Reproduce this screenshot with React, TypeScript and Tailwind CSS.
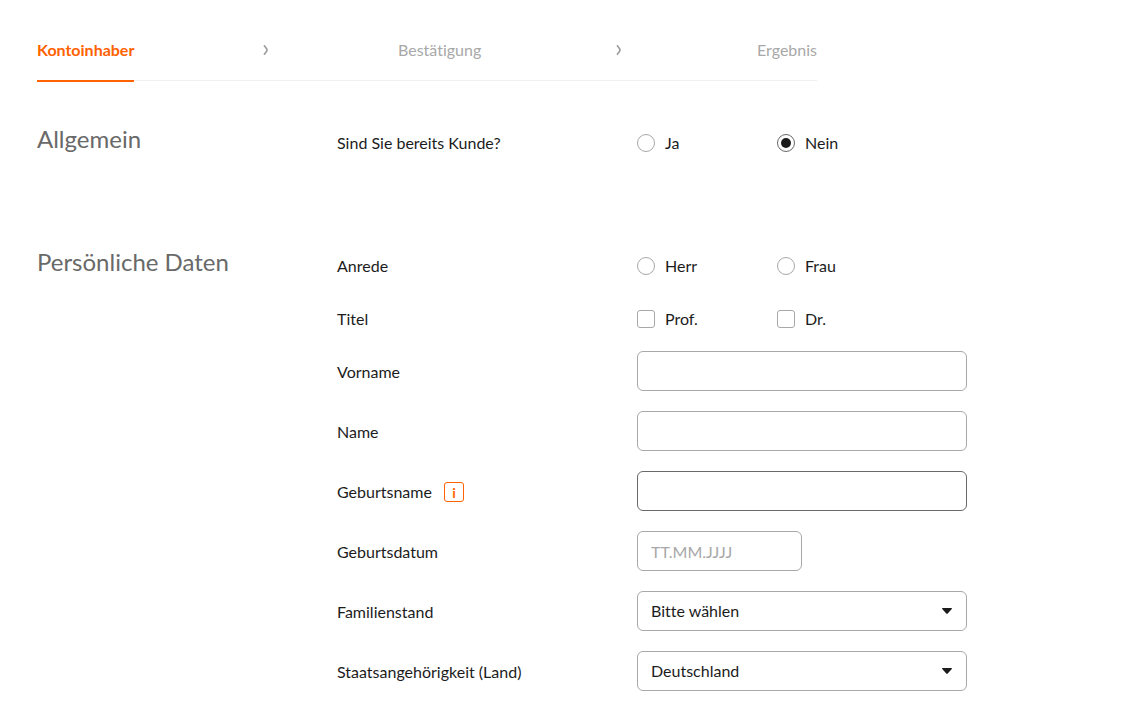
import { Fragment, useState } from 'react'
import type { InputHTMLAttributes, ReactNode } from 'react'

const steps = [
  { label: 'Kontoinhaber' },
  { label: 'Bestätigung', arrow: 'flex-[260]' },
  { label: 'Ergebnis', arrow: 'flex-[272]' },
]

const fieldClass =
  'h-10 w-full rounded-md border border-[#a8a8a8] bg-white px-[13px] text-base text-[#1c1c1c] outline-none placeholder:text-[#a8a8a8] placeholder:opacity-100 focus:border-[#696969]'

function StepArrow() {
  return (
    <svg width="6" height="10" viewBox="0 0 6 10" fill="none" aria-hidden="true">
      <path d="M1 0.3L3.4 3.4C4.3 4.6 4.3 5.4 3.4 6.6L1 9.7" stroke="#9a9a9a" strokeWidth="1.6" />
    </svg>
  )
}

function Steps() {
  return (
    <nav aria-label="Fortschritt" className="max-w-[780px]">
      <ol className="flex border-b border-[#f0f0f0]">
        {steps.map(({ label, arrow }, i) => (
          <Fragment key={label}>
            {arrow && (
              <li className={`flex h-6 items-center justify-center ${arrow}`} aria-hidden="true">
                <StepArrow />
              </li>
            )}
            <li
              aria-current={i === 0 ? 'step' : undefined}
              className={
                i === 0
                  ? '-mb-0.5 border-b-2 border-[#ff6200] pb-[18px] font-bold text-[#ff6200]'
                  : 'pb-[18px] text-[#a8a8a8]'
              }
            >
              {label}
            </li>
          </Fragment>
        ))}
      </ol>
    </nav>
  )
}

function Section({ title, children }: { title: string; children: ReactNode }) {
  return (
    <section className="grid grid-cols-[300px_minmax(0,1fr)]">
      <h2 className="-mt-1 text-2xl text-[#696969]">{title}</h2>
      <div>{children}</div>
    </section>
  )
}

interface ChoiceProps extends InputHTMLAttributes<HTMLInputElement> {
  label: string
}

function Choice({ label, type, ...props }: ChoiceProps) {
  return (
    <label className="flex w-[140px] items-center gap-2.5">
      <input
        type={type}
        className={
          type === 'radio'
            ? 'grid size-[18px] appearance-none place-content-center rounded-full border border-[#a8a8a8] before:size-2.5 before:rounded-full checked:border-[#696969] checked:before:bg-[#1c1c1c]'
            : 'grid size-[18px] appearance-none place-content-center rounded-[3px] border border-[#a8a8a8] before:size-2.5 checked:before:bg-[#1c1c1c]'
        }
        {...props}
      />
      {label}
    </label>
  )
}

function ChoiceRow({ legend, children }: { legend: string; children: ReactNode }) {
  return (
    <div role="group" aria-label={legend} className="grid h-8 grid-cols-[300px_minmax(0,1fr)] items-center">
      <span>{legend}</span>
      <div className="flex">{children}</div>
    </div>
  )
}

function FieldRow({ id, label, info, children }: { id: string; label: string; info?: boolean; children: ReactNode }) {
  return (
    <div className="grid grid-cols-[300px_minmax(0,1fr)] items-center">
      <div className="flex items-center gap-3 pt-0.5">
        <label htmlFor={id}>{label}</label>
        {info && (
          <button
            type="button"
            aria-label={`Info zu ${label}`}
            className="flex size-5 items-center justify-center rounded-[3px] border border-[#ff6200] pt-0.5 text-sm font-bold text-[#ff6200]"
          >
            i
          </button>
        )}
      </div>
      {children}
    </div>
  )
}

function Select({ id, options }: { id: string; options: string[] }) {
  return (
    <div className="relative">
      <select id={id} className={`${fieldClass} appearance-none`}>
        {options.map((option) => (
          <option key={option}>{option}</option>
        ))}
      </select>
      <svg
        className="pointer-events-none absolute inset-y-0 right-[15px] my-auto"
        width="10"
        height="6"
        viewBox="0 0 10 6"
        aria-hidden="true"
      >
        <path d="M0.6 0H9.4C9.9 0 10.1 0.6 9.8 0.9L5.7 5.6C5.3 6 4.7 6 4.3 5.6L0.2 0.9C-0.1 0.6 0.1 0 0.6 0Z" fill="#1c1c1c" />
      </svg>
    </div>
  )
}

export default function App() {
  const [customer, setCustomer] = useState('nein')

  return (
    <main className="min-h-screen bg-white px-[37px] pt-[38px] pb-3 font-['Lato','Noto_Sans',sans-serif] text-base text-[#1c1c1c] [font-variant-ligatures:none]">
      <Steps />
      <form className="mt-[46px] flex max-w-[930px] flex-col gap-[91px]">
        <Section title="Allgemein">
          <ChoiceRow legend="Sind Sie bereits Kunde?">
            <Choice type="radio" name="kunde" label="Ja" checked={customer === 'ja'} onChange={() => setCustomer('ja')} />
            <Choice type="radio" name="kunde" label="Nein" checked={customer === 'nein'} onChange={() => setCustomer('nein')} />
          </ChoiceRow>
        </Section>

        <Section title="Persönliche Daten">
          <div className="flex flex-col gap-[21px]">
            <ChoiceRow legend="Anrede">
              <Choice type="radio" name="anrede" label="Herr" />
              <Choice type="radio" name="anrede" label="Frau" />
            </ChoiceRow>
            <ChoiceRow legend="Titel">
              <Choice type="checkbox" name="prof" label="Prof." />
              <Choice type="checkbox" name="dr" label="Dr." />
            </ChoiceRow>
          </div>

          <div className="mt-4 flex flex-col gap-5">
            <FieldRow id="vorname" label="Vorname">
              <input id="vorname" type="text" className={fieldClass} />
            </FieldRow>
            <FieldRow id="name" label="Name">
              <input id="name" type="text" className={fieldClass} />
            </FieldRow>
            <FieldRow id="geburtsname" label="Geburtsname" info>
              <input id="geburtsname" type="text" className={`${fieldClass} border-[#696969]!`} />
            </FieldRow>
            <FieldRow id="geburtsdatum" label="Geburtsdatum">
              <input id="geburtsdatum" type="text" placeholder="TT.MM.JJJJ" className={`${fieldClass} max-w-[165px]`} />
            </FieldRow>
            <FieldRow id="familienstand" label="Familienstand">
              <Select id="familienstand" options={['Bitte wählen', 'ledig', 'verheiratet', 'geschieden', 'verwitwet']} />
            </FieldRow>
            <FieldRow id="land" label="Staatsangehörigkeit (Land)">
              <Select id="land" options={['Deutschland', 'Österreich', 'Schweiz']} />
            </FieldRow>
          </div>
        </Section>
      </form>
    </main>
  )
}
